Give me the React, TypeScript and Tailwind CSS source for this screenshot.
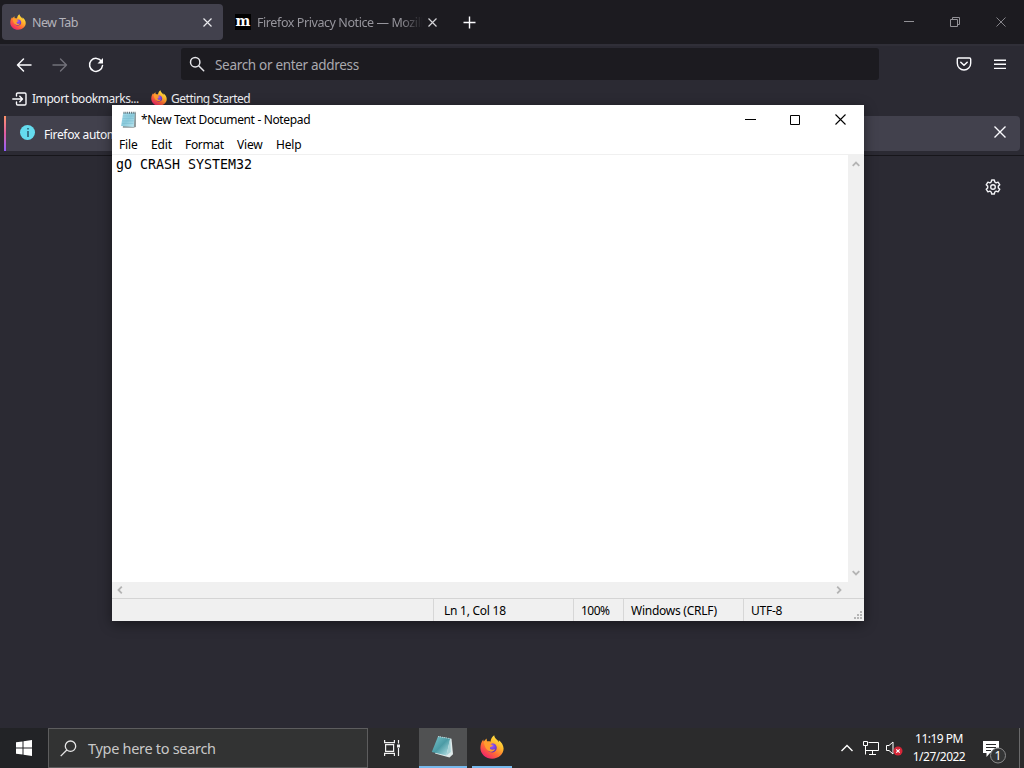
import React from "react";

function FirefoxLogo({ size, id }: { size: number; id: string }) {
  return (
    <svg width={size} height={size} viewBox="0 0 24 24" className="shrink-0">
      <defs>
        <linearGradient id={id + "a"} x1="0.85" y1="0.05" x2="0.2" y2="0.95">
          <stop offset="0" stopColor="#fff04a" />
          <stop offset="0.35" stopColor="#ffb62c" />
          <stop offset="0.65" stopColor="#ff6a35" />
          <stop offset="1" stopColor="#f0206e" />
        </linearGradient>
        <radialGradient id={id + "b"} cx="0.5" cy="0.3" r="0.7">
          <stop offset="0" stopColor="#9a5cff" />
          <stop offset="1" stopColor="#5b2bb5" />
        </radialGradient>
      </defs>
      <path
        d="M14.200.3c.2 2.400 1.600 3.500 3 4.800.7.7 1.300 1.300 1.700 2.100.1-.8 0-1.500-.3-2.200 2.800 2 5 5.300 5 8.600 0 5.700-5.100 10.100-11.400 10.100S.4 19.200.4 13c0-3.300 1.100-6.600 2.900-8.600 0 1 .1 1.600.5 2.200.8-1.100 1.600-2.300 2.900-3.100-.2 1.200 0 2.100.5 3 1.100-.3 2.300-.2 3.300.2C10.800 3.900 12 1.900 14.200.3z"
        fill={`url(#${id}a)`}
      />
      <path d="M7.800 9.200c1.800-.2 3-1.400 4.800-.9 2.800.2 4.200 2.300 4.200 4.500 0 2.700-2 4.600-4.600 4.600-3 0-5-1.800-5-4.400 0-1.700.1-2.600.6-3.800z" fill={`url(#${id}b)`} />
      <path d="M3.800 6.600C5.200 6 7.600 6.500 8.700 7.500c1.300-.3 2.800 0 3.900.8-1 .1-1.600.6-2.200 1.300l2.500.3c-.3 1.500-2.100 1.700-2.900 2.500-.3.800.2 1.700 1.400 2.200 1.400.5 2.300-.6 3.600-.3-.8 1.900-3 2.800-5 2.200C6.400 15.700 4.500 12 3.800 6.600z" fill="#ff9c2e" />
    </svg>
  );
}

function NotepadLogo({ size, id, tilted = false }: { size: number; id: string; tilted?: boolean }) {
  return (
    <svg width={size} height={size} viewBox="0 0 24 24" className="shrink-0">
      <defs>
        <linearGradient id={id} x1="0" y1="0" x2="1" y2="1">
          <stop offset="0" stopColor={tilted ? "#7cc6cd" : "#a9dceb"} />
          <stop offset="0.5" stopColor={tilted ? "#4b9ba5" : "#8bcbdc"} />
          <stop offset="1" stopColor={tilted ? "#bfe7ea" : "#bfe8f2"} />
        </linearGradient>
      </defs>
      {tilted ? (
        <g>
          <path d="M8 1.500l12.500 2.200 1.500 15.500-3.500 3.300L4 18.500z" fill="#dfeaea" />
          <path d="M7 1.500l12.200 2.100-3.800 16.800L.8 17z" fill={`url(#${id})`} />
          <path d="M19.200 3.600l-3.800 16.800 4.400-3.500z" fill="#a8d3d7" />
          <path d="M7 1.500l12.200 2.100" stroke="#b9d4d7" strokeWidth="1" strokeDasharray="1 1" />
        </g>
      ) : (
        <g>
          <path d="M6 3h16.500v19.500L19 23.500H4z" fill="#8b9698" />
          <path d="M4.500 2.500h16.500L19.500 22.500 1.500 21z" fill={`url(#${id})`} />
          <path d="M4 7h16M3.700 10.500h16M3.400 14h16M3 17.500h16" stroke="#74b8cc" strokeWidth="0.7" />
          <path d="M5 2.500h17" stroke="#53636a" strokeWidth="2.600" strokeDasharray="1.300 1.300" />
        </g>
      )}
    </svg>
  );
}

function Cross({ size, color, width = 1.2 }: { size: number; color: string; width?: number }) {
  return (
    <svg width={size} height={size} viewBox={`0 0 ${size} ${size}`} className="shrink-0">
      <path d={`M.5.5L${size - 0.5} ${size - 0.5}M${size - 0.5}.5L.5 ${size - 0.5}`} stroke={color} strokeWidth={width} />
    </svg>
  );
}

function Chevron({ className }: { className: string }) {
  return (
    <svg width="8" height="6" viewBox="0 0 8 6" className={className} fill="none">
      <path d="M.7 4.800L4 1.500l3.300 3.300" stroke="#b4b4b4" strokeWidth="1.800" />
    </svg>
  );
}

function TabStrip() {
  return (
    <div className="flex h-11 bg-[#1c1b20] pt-1 pl-0.5">
      <div className="flex h-9 w-[221px] items-center rounded bg-[#42414d] pr-[11.5px] pl-2">
        <FirefoxLogo size={16} id="ft" />
        <span className="ml-1.5 flex-1 pt-0.5 text-[12.5px] tracking-[-0.6px] text-[#b4b3bb]">New Tab</span>
        <Cross size={9} color="#e9e9ed" />
      </div>
      <div className="flex h-9 w-[225px] items-center pr-[11.5px] pl-3">
        <span className="flex size-4 shrink-0 items-center justify-center bg-black pb-0.5 font-['DejaVu_Serif',serif] text-[14px] leading-none font-bold text-white">m</span>
        <span className="ml-1.5 w-[166px] shrink-0 overflow-hidden mask-[linear-gradient(to_right,black_86%,transparent)] pt-0.5 text-[12.5px] tracking-[-0.42px] whitespace-nowrap text-[#96959c]">
          Firefox Privacy Notice — Mozilla
        </span>
        <span className="ml-auto flex"><Cross size={9} color="#d5d5d9" /></span>
      </div>
      <svg width="13" height="13" viewBox="0 0 13 13" className="mt-3 ml-[15px]">
        <path d="M6.500.5v12M.5 6.500h12" stroke="#fbfbfe" strokeWidth="1.400" />
      </svg>
      <div className="ml-auto flex h-9 items-center pr-[18px]">
        <svg width="10" height="10" viewBox="0 0 10 10"><path d="M0 4.500h10" stroke="#929196" /></svg>
        <svg width="10" height="10" viewBox="0 0 10 10" fill="none" className="ml-9"><path d="M.5 2.500h7v7h-7zM2.500 2.500v-2h7v7h-2" stroke="#929196" /></svg>
        <span className="ml-9"><Cross size={10} color="#929196" width={0.9} /></span>
      </div>
    </div>
  );
}

function NavBar() {
  return (
    <div className="flex h-9 items-center border-t-2 border-[#302f38] pt-0.5">
      <svg width="16" height="16" viewBox="0 0 16 16" fill="none" className="mt-px ml-4"><path d="M1.500 8H15M7.500 2L1.500 8l6 6" stroke="#fbfbfe" strokeWidth="1.500" strokeLinecap="round" strokeLinejoin="round" /></svg>
      <svg width="16" height="16" viewBox="0 0 16 16" fill="none" className="mt-px ml-5"><path d="M1 8h13.500M8.500 2l6 6-6 6" stroke="#72717a" strokeWidth="1.400" strokeLinecap="round" strokeLinejoin="round" /></svg>
      <svg width="16" height="16" viewBox="0 0 16 16" fill="none" className="mt-px ml-5">
        <path d="M13.600 4.500A6.500 6.500 0 1 0 14.500 8.500" stroke="#fbfbfe" strokeWidth="1.500" strokeLinecap="round" />
        <path d="M15 1v5.500H9.500z" fill="#fbfbfe" />
      </svg>
      <div className="ml-[77px] flex h-8 w-[698px] items-center rounded-[3px] bg-[#1c1b20] pl-2">
        <svg width="16" height="16" viewBox="0 0 16 16" fill="none"><circle cx="6.200" cy="6.200" r="4.700" stroke="#e4e4e8" strokeWidth="1.500" /><path d="M9.700 9.700l5 5" stroke="#e4e4e8" strokeWidth="1.500" strokeLinecap="round" /></svg>
        <span className="ml-2.5 pt-[3px] text-[13.5px] tracking-[-0.31px] text-[#aaa9af]">Search or enter address</span>
      </div>
      <svg width="16" height="16" viewBox="0 0 16 16" fill="none" className="ml-[77px]"><path d="M2.500 2h11c.7 0 1.200.5 1.200 1.200v4.100a6.700 6.700 0 0 1-13.400 0V3.200C1.300 2.500 1.800 2 2.500 2z" stroke="#fbfbfe" strokeWidth="1.400" /><path d="M4.800 6.200L8 9.300l3.200-3.100" stroke="#fbfbfe" strokeWidth="1.500" strokeLinecap="round" strokeLinejoin="round" /></svg>
      <svg width="12" height="11" viewBox="0 0 12 11" className="ml-[22px]"><path d="M0 1.200h12M0 5.300h12M0 9.400h12" stroke="#fbfbfe" strokeWidth="1.400" /></svg>
    </div>
  );
}

function Browser() {
  return (
    <div className="flex flex-1 flex-col">
      <TabStrip />
      <NavBar />
      <div className="flex h-9 items-center pt-0.5 pl-3 text-[12px] text-[#f1f1f5]">
        <svg width="16" height="14" viewBox="0 0 16 14" fill="none"><path d="M4.500 4V2.200C4.500 1.500 5 1 5.700 1h7.100c.7 0 1.200.5 1.200 1.200v9.600c0 .7-.5 1.200-1.200 1.200H5.700c-.7 0-1.200-.5-1.200-1.200V10M.8 7h9.500M7.800 4.200L10.500 7 7.800 9.800" stroke="#fbfbfe" strokeWidth="1.400" strokeLinecap="round" strokeLinejoin="round" /></svg>
        <span className="ml-1 w-[107px] tracking-[-0.45px] whitespace-nowrap">Import bookmarks...</span>
        <span className="mb-0.5 ml-3"><FirefoxLogo size={16} id="fb" /></span>
        <span className="ml-1 tracking-[-0.47px]">Getting Started</span>
      </div>
      <div className="flex h-[40px] border-b border-[#17161b] pl-1">
        <div className="flex h-[35px] w-[1016px] items-center overflow-hidden rounded-r bg-[#42414d] pr-[14px]">
          <span className="h-full w-0.5 bg-linear-to-b from-[#ff9466] via-[#e05ba0] to-[#9059ff]" />
          <span className="mb-0.5 ml-3.5 flex size-[15px] items-center justify-center rounded-full bg-[#65dcef]">
            <svg width="4" height="9" viewBox="0 0 4 9"><path d="M2 0v1.500M2 3v6" stroke="#274b61" strokeWidth="1.400" /></svg>
          </span>
          <span className="ml-[9px] flex-1 pt-0.5 text-[12px] tracking-[-0.36px] whitespace-nowrap text-[#fbfbfe]">Firefox autom</span>
          <span className="mb-[3px] flex"><Cross size={12} color="#fbfbfe" width={1.4} /></span>
        </div>
      </div>
      <div className="flex flex-1 justify-end pt-[23px] pr-[23px]">
        <svg width="16" height="16" viewBox="0 0 16 16" fill="none" stroke="#f0f0f4" strokeWidth="1.400" strokeLinejoin="round">
          <path d="M6.700 1h2.600l.5 2 1.300.8 2-.7 1.700 2.700-1.500 1.300v1.800l1.500 1.300-1.700 2.700-2-.7-1.300.8-.5 2H6.700l-.5-2-1.300-.8-2 .7-1.700-2.700L2.700 8.900V7.100L1.200 5.800l1.700-2.700 2 .7L6.200 3z" />
          <circle cx="8" cy="8" r="2.300" />
        </svg>
      </div>
    </div>
  );
}

function Notepad() {
  return (
    <div className="absolute top-[105px] left-[112px] flex h-[516px] w-[752px] flex-col bg-white text-[12px] text-black shadow-[0_3px_12px_rgba(0,0,0,0.45)]">
      <div className="flex h-[29px] items-center pl-2">
        <NotepadLogo size={17} id="nw" />
        <span className="ml-1 pt-px tracking-[-0.35px]">*New Text Document - Notepad</span>
        <svg width="11" height="11" viewBox="0 0 11 11" className="ml-auto"><path d="M0 5.500h11" stroke="#000" /></svg>
        <svg width="10" height="10" viewBox="0 0 10 10" fill="none" className="ml-[34px]"><path d="M.5.5h9v9h-9z" stroke="#000" /></svg>
        <span className="mr-[18px] ml-[35px]"><Cross size={11} color="#000" width={1.1} /></span>
      </div>
      <div className="flex h-[21px] items-center border-b border-[#f0f0f0] pt-px pl-[7px] leading-[18px] tracking-[-0.15px]">
        <span className="w-8">File</span>
        <span className="w-[34px]">Edit</span>
        <span className="w-[52px] tracking-[-0.35px]">Format</span>
        <span className="w-[39px]">View</span>
        <span>Help</span>
      </div>
      <div className="flex flex-1">
        <div className="flex-1 pt-px pl-1 font-['DejaVu_Sans_Mono',monospace] text-[13.3px] leading-[18px]">gO CRASH SYSTEM32</div>
        <div className="flex w-4 flex-col items-center justify-between bg-[#f0f0f0] pt-[6px] pr-px pb-[6px]">
          <Chevron className="" />
          <Chevron className="rotate-180" />
        </div>
      </div>
      <div className="flex h-4 items-center justify-between bg-[#f0f0f0] pr-[21px] pl-1">
        <Chevron className="-rotate-90" />
        <Chevron className="rotate-90" />
      </div>
      <div className="flex h-[23px] items-center border-t border-[#d4d4d4] bg-[#f0f0f0] tracking-[-0.25px]">
        <span className="w-[321px]" />
        <span className="flex h-full w-[140px] items-center border-l border-[#d7d7d7] pt-0.5 pl-[10px]">Ln 1, Col 18</span>
        <span className="flex h-full w-[50px] items-center border-l border-[#d7d7d7] pt-0.5 pl-[7px] tracking-[-0.5px]">100%</span>
        <span className="flex h-full w-[120px] items-center border-l border-[#d7d7d7] pt-0.5 pl-[7px]">Windows (CRLF)</span>
        <span className="flex h-full items-center border-l border-[#d7d7d7] pt-0.5 pl-[7px]">UTF-8</span>
        <svg width="9" height="9" viewBox="0 0 9 9" className="mt-auto mr-px mb-px ml-auto" fill="#b5b5b5"><path d="M6 0h2v2H6zM3 3h2v2H3zM6 3h2v2H6zM0 6h2v2H0zM3 6h2v2H3zM6 6h2v2H6z" /></svg>
      </div>
    </div>
  );
}

function Taskbar() {
  return (
    <div className="flex h-10 items-center bg-[#2b2b2c] text-white">
      <div className="flex h-full w-12 items-center justify-center bg-[#222326]">
        <svg width="16" height="16" viewBox="0 0 16 16" fill="#fff"><path d="M0 2.300l6.500-.9v6.100H0zM7.500 1.200L16 0v7.500H7.500zM0 8.500h6.500v6.100L0 13.700zM7.500 8.500H16V16l-8.500-1.200z" /></svg>
      </div>
      <div className="flex h-10 w-80 items-center border border-[#5d5d5e] bg-[#323333] pl-[11px]">
        <svg width="17" height="17" viewBox="0 0 17 17" fill="none" stroke="#e6e6e6" strokeWidth="1.300"><circle cx="10.500" cy="6.200" r="5.200" /><path d="M6.800 10L.7 16.100" /></svg>
        <span className="ml-[11px] pt-px text-[14.5px] tracking-[-0.3px] text-[#c8c8c8]">Type here to search</span>
      </div>
      <svg width="16" height="16" viewBox="0 0 16 16" fill="none" className="ml-4" stroke="#f2f2f2" strokeWidth="1.200"><path d="M.6 0v2.600h9.800V0M.6 16v-2.600h9.800V16M1.600 4.600h8v6.800h-8zM14.500 0v3.500M14.500 8v8" /><path d="M13 4.500h3v3h-3z" fill="#f2f2f2" stroke="none" /></svg>
      <div className="ml-[19px] flex h-full w-12 items-center justify-center border-b-2 border-[#76b9ed] bg-[#505152]">
        <NotepadLogo size={24} id="nt" tilted />
      </div>
      <div className="ml-[5px] flex h-full w-10 items-center justify-center border-b-2 border-[#76b9ed]">
        <FirefoxLogo size={24} id="fk" />
      </div>
      <div className="ml-auto flex h-full items-center">
        <svg width="12" height="8" viewBox="0 0 12 8" fill="none"><path d="M.5 7L6 1.500 11.500 7" stroke="#fff" strokeWidth="1.400" /></svg>
        <svg width="17" height="14" viewBox="0 0 17 14" fill="none" stroke="#fff" className="ml-[10px]"><path d="M5.500 1.500h10v8H2.500v-4M.5.500h4v4h-4zM2.500 4.500v9M9.500 9.500v4M6 13.500h7" /></svg>
        <svg width="17" height="15" viewBox="0 0 17 15" fill="none" className="ml-[6px]"><path d="M.5 4.500H3l4-3.500v12L3 9.500H.5z" stroke="#fff" /><circle cx="12" cy="10" r="4.500" fill="#d72638" /><path d="M10.300 8.300l3.400 3.400M13.700 8.300l-3.400 3.400" stroke="#fff" strokeWidth="1.200" /></svg>
        <div className="ml-[7px] flex w-[58px] flex-col items-center text-[12px] leading-[18px] tracking-[-0.5px]">
          <span>11:19 PM</span>
          <span>1/27/2022</span>
        </div>
        <svg width="26" height="26" viewBox="0 0 26 26" fill="none" className="mt-[5px] ml-[13px]">
          <path d="M2 3h16v12h-9l-3.500 4v-4H2z" fill="#fff" />
          <path d="M5 6.500h10M5 9.500h10M5 12.500h5" stroke="#2b2b2c" strokeWidth="1" />
          <circle cx="17" cy="17.500" r="7.500" fill="#343536" stroke="#8b8b8c" strokeWidth="1" />
          <text x="17" y="22" textAnchor="middle" fontSize="12" fill="#fff" stroke="none">1</text>
        </svg>
        <span className="mr-1 ml-[12px] h-full w-px bg-[#6a6a6b]" />
      </div>
    </div>
  );
}

export default function App() {
  return (
    <div className="relative flex h-[768px] w-[1024px] flex-col overflow-hidden bg-[#2b2a33] font-['Noto_Sans',sans-serif]">
      <Browser />
      <Taskbar />
      <Notepad />
    </div>
  );
}
